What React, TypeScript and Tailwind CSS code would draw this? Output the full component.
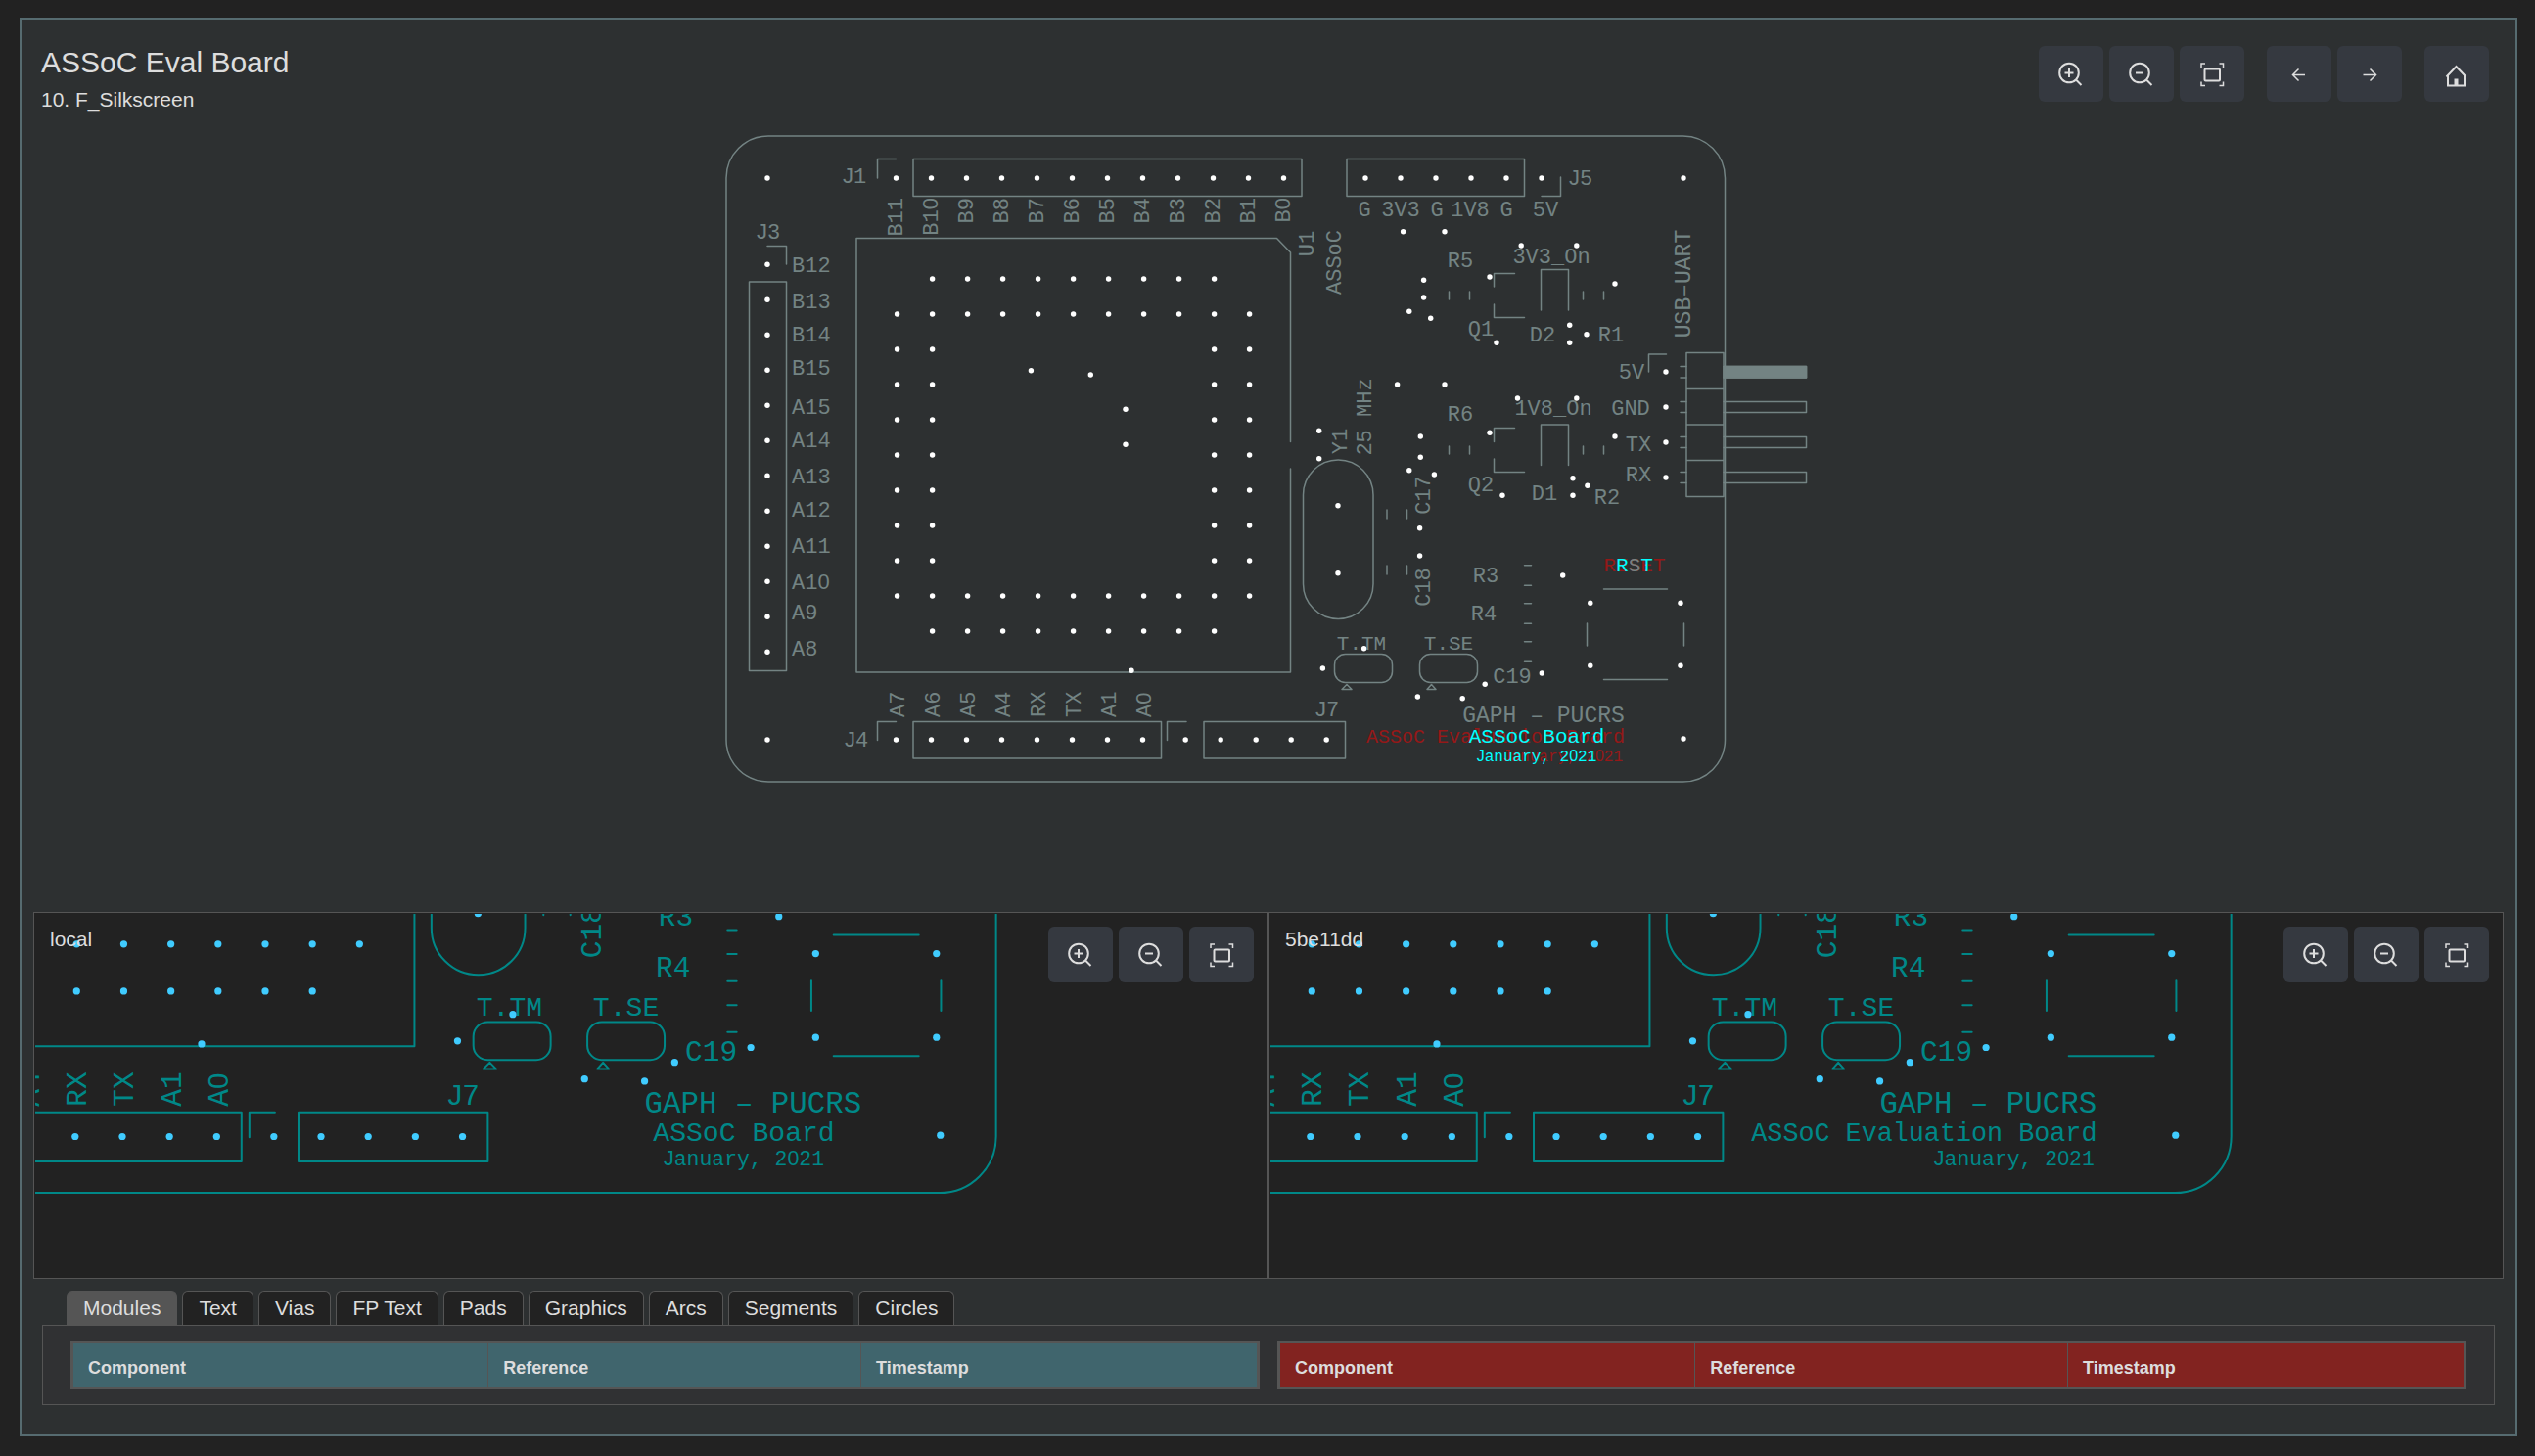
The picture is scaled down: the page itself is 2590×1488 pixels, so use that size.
import { useState } from "react";
import type { ReactNode } from "react";

type Point = [number, number];

/** n points from (x, y), each one (dx, dy) further on. */
function run(x: number, y: number, n: number, dx: number, dy: number): Point[] {
  return Array.from({ length: n }, (_, i): Point => [x + i * dx, y + i * dy]);
}

const DRILLS: Point[] = [
  // mounting holes
  [784, 182], [1720, 182], [784, 756], [1720, 755],
  // headers
  ...run(915.5, 182, 12, 36, 0),
  ...run(1395, 182, 6, 36, 0),
  ...run(784, 270.3, 12, 0, 36),
  ...run(915.5, 756, 8, 36, 0),
  ...run(1211.2, 756, 5, 36, 0),
  ...run(1702, 380, 4, 0, 36),
  // U1 socket
  ...run(952.6, 285, 9, 36, 0),
  ...run(916.6, 321, 11, 36, 0),
  ...run(916.6, 357, 7, 0, 36),
  ...run(952.6, 357, 7, 0, 36),
  ...run(1240.6, 357, 7, 0, 36),
  ...run(1276.6, 357, 7, 0, 36),
  ...run(916.6, 609, 11, 36, 0),
  ...run(952.6, 645, 9, 36, 0),
  // vias
  [1053.4, 378.7], [1114.3, 383], [1150, 418.3], [1150, 454.3], [1156, 685.3],
  [1433.6, 236.7], [1476, 236.7], [1554.2, 251], [1610.8, 251],
  [1454.6, 286.3], [1454.6, 304], [1439.8, 318.3], [1461.7, 325.3],
  [1522, 283], [1650, 290], [1603.7, 332.3], [1603.7, 350.3], [1621, 341.7], [1529, 350.3],
  [1427.6, 393], [1476, 393], [1550.5, 407], [1610.8, 407],
  [1347.7, 440.3], [1347.7, 468.7], [1451.3, 446], [1451.3, 467.3],
  [1439.8, 480.7], [1465.4, 485], [1522, 442.3], [1650, 446],
  [1607, 488.7], [1607, 506.3], [1621.9, 496.3], [1535, 506.3],
  [1367, 516.7], [1367, 585.7], [1450.6, 539.7], [1450.6, 568],
  [1596.7, 588], [1624.8, 616.3], [1717, 616.3], [1624.8, 680.3], [1717, 680.3],
  [1393.6, 662.7], [1351.4, 683], [1517.2, 699.3], [1575.3, 688], [1448.4, 712], [1494.2, 713.7],
];

const OUTLINES = [
  // J1, J5, J3, J4, J7
  "M896.5 182V162.5H915.5M933 162.5H1330V200.5H933Z",
  "M1376 162.5H1557.5V200.5H1376ZM1575 200.5H1594.5V181",
  "M784 251.5H803.5V270M765.5 288H803.5V685.5H765.5Z",
  "M896.5 756.5V737.5H915.5M933 737.5H1186.5V775H933Z",
  "M1192.5 756.5V737.5H1212M1230 737.5H1374.5V775H1230Z",
  // U1
  "M1318.5 451.5V258L1304.5 243.5H875V687H1318.5V479",
  // Q1, D2 and their resistors
  "M1547.5 279.5H1526.5V293M1526.5 311V324.5H1557.5M1574.5 317V275.5H1602.5V317",
  "M1480.5 298V306M1501.5 298V306M1617.5 298V306M1638.5 298V306",
  // Q2, D1 and their resistors
  "M1547.5 437.5H1526.5V451.5M1526.5 469V482.5H1557.5M1574.5 475.5V434H1602.5V475.5",
  "M1480.5 456V464M1501.5 456V464M1617.5 456V464M1638.5 456V464",
  // USB-UART header
  "M1684.5 380V362H1702.5M1723 360.5H1761V507.5H1723ZM1723 397.5H1761M1723 434H1761M1723 470.5H1761",
  "M1761 374.5H1845.5V386H1761M1761 410.5H1845.5V421.5H1761M1761 446.5H1845.5V457.5H1761M1761 482.5H1845.5V493.5H1761",
  "M1717 374.5H1723M1717 386H1723M1717 410.5H1723M1717 421.5H1723M1717 446.5H1723M1717 457.5H1723M1717 482.5H1723M1717 493.5H1723",
  // C17, C18
  "M1417 521V530M1437.5 521V530M1417 578V587M1437.5 578V587",
  // R3, R4, C19
  "M1557.5 577.7H1564.5M1557.5 598.3H1564.5M1557.5 616.7H1564.5M1557.5 637.3H1564.5M1557.5 655.7H1564.5M1557.5 676.3H1564.5",
  // reset switch
  "M1638.5 602H1703.5M1638.5 694.5H1703.5M1621.5 637V660M1720.5 637V660",
  // pin one marks
  "M1371 704.5L1376 699.5L1381 704.5ZM1458 704.5L1462.5 699.5L1467 704.5Z",
];

type Label = { t: string; x: number; y: number; up?: boolean; anchor?: "start" | "middle" | "end"; size?: number };

const side = ["B12", "B13", "B14", "B15", "A15", "A14", "A13", "A12", "A11", "A10", "A9", "A8"];
const sideY = [278, 315, 349, 383, 423, 457, 494, 528, 565, 602, 633, 670];

const LABELS: Label[] = [
  { t: "J1", x: 873, y: 187 },
  { t: "J3", x: 785, y: 244 },
  { t: "J4", x: 875, y: 763 },
  { t: "J5", x: 1615, y: 189 },
  { t: "J7", x: 1356, y: 732 },
  ...["B11", "B10", "B9", "B8", "B7", "B6", "B5", "B4", "B3", "B2", "B1", "B0"].map(
    (t, i): Label => ({ t, x: 922 + i * 36, y: 202, up: true, anchor: "end" }),
  ),
  ...side.map((t, i): Label => ({ t, x: 809, y: sideY[i], anchor: "start" })),
  ...["A7", "A6", "A5", "A4", "RX", "TX", "A1", "A0"].map(
    (t, i): Label => ({ t, x: 924 + i * 36, y: 733, up: true, anchor: "start" }),
  ),
  { t: "U1", x: 1342, y: 249, up: true },
  { t: "ASSoC", x: 1370, y: 268, up: true },
  { t: "G", x: 1394, y: 221 },
  { t: "3V3", x: 1431, y: 221 },
  { t: "G", x: 1468, y: 221 },
  { t: "1V8", x: 1502, y: 221 },
  { t: "G", x: 1539, y: 221 },
  { t: "5V", x: 1579, y: 221 },
  { t: "R5", x: 1492, y: 273 },
  { t: "3V3_On", x: 1585, y: 269 },
  { t: "Q1", x: 1513, y: 343 },
  { t: "D2", x: 1576, y: 349 },
  { t: "R1", x: 1646, y: 349 },
  { t: "USB–UART", x: 1727, y: 290, up: true, size: 23 },
  { t: "5V", x: 1667, y: 387 },
  { t: "GND", x: 1666, y: 424 },
  { t: "TX", x: 1674, y: 461 },
  { t: "RX", x: 1674, y: 492 },
  { t: "R6", x: 1492, y: 430 },
  { t: "1V8_On", x: 1587, y: 424 },
  { t: "Q2", x: 1513, y: 502 },
  { t: "D1", x: 1578, y: 511 },
  { t: "R2", x: 1642, y: 515 },
  { t: "25 MHz", x: 1401, y: 426, up: true },
  { t: "Y1", x: 1376, y: 451, up: true },
  { t: "C17", x: 1461, y: 506, up: true },
  { t: "C18", x: 1461, y: 600, up: true },
  { t: "R3", x: 1518, y: 595 },
  { t: "R4", x: 1516, y: 634 },
  { t: "T.TM", x: 1391, y: 664, size: 21 },
  { t: "T.SE", x: 1480, y: 664, size: 21 },
  { t: "C19", x: 1545, y: 698 },
  { t: "GAPH – PUCRS", x: 1577, y: 738, size: 23 },
];

/** Mono lettering with a plain zero and a plain J. */
function lettering(text: string): ReactNode {
  return text.split(/([0J])/).map((part, i) =>
    part === "0" || part === "J" ? (
      <tspan key={i} fontFamily='"Liberation Sans", sans-serif'>
        {part}
      </tspan>
    ) : (
      part
    ),
  );
}

function SilkText({ t, x, y, up, anchor = "middle", size = 22 }: Label) {
  return (
    <text
      x={x}
      y={y}
      fontSize={size}
      textAnchor={anchor}
      transform={up ? `rotate(-90 ${x} ${y})` : undefined}
      xmlSpace="preserve"
    >
      {lettering(t)}
    </text>
  );
}

const MONO = '"Liberation Mono", monospace';

type BoardProps = { line: string; dot: string; from?: Point; children: ReactNode };

/** The silkscreen; labels and holes left of or above `from` are skipped. */
function Board({ line, dot, from = [0, 0], children }: BoardProps) {
  const shown = (x: number, y: number) => x >= from[0] && y >= from[1];
  return (
    <>
      <g fill="none" stroke={line} strokeWidth={1.5} strokeLinecap="round" strokeLinejoin="round">
        <rect x={742} y={139} width={1020.5} height={660} rx={43} />
        <rect x={1331.5} y={470} width={71.5} height={162.5} rx={35.75} />
        <rect x={1363.5} y={668.5} width={59} height={29} rx={11} />
        <rect x={1450.5} y={668.5} width={59} height={29} rx={11} />
        <rect x={1761} y={374.5} width={84.5} height={11.5} fill={line} />
        {OUTLINES.map((d) => (
          <path key={d} d={d} />
        ))}
      </g>
      <g fill={line} fontFamily={MONO}>
        {LABELS.filter((l) => shown(l.x, l.y)).map((l) => (
          <SilkText key={`${l.x},${l.y}`} {...l} />
        ))}
      </g>
      <g fontFamily={MONO}>{children}</g>
      <g fill={dot}>
        {DRILLS.filter(([x, y]) => shown(x, y)).map(([x, y]) => (
          <circle key={`${x},${y}`} cx={x} cy={y} r={2.7} />
        ))}
      </g>
    </>
  );
}

function Icon({ children, width = 2 }: { children: ReactNode; width?: number }) {
  return (
    <svg
      aria-hidden="true"
      viewBox="0 0 24 24"
      className="size-6 overflow-visible"
      fill="none"
      stroke="currentColor"
      strokeWidth={width}
    >
      {children}
    </svg>
  );
}

const icons = {
  zoomIn: (
    <Icon>
      <circle cx={10} cy={10.5} r={9.8} />
      <path d="M5.5 10.5H14.5M10 6V15M17 17.5L22.5 23" />
    </Icon>
  ),
  zoomOut: (
    <Icon>
      <circle cx={10} cy={10.5} r={9.8} />
      <path d="M6 10.5H14M17 17.5L22.5 23" />
    </Icon>
  ),
  fit: (
    <Icon width={1.5}>
      <path d="M1 5V1H5M19.5 1H23.5V5M23.5 19.5V23.5H19.5M5 23.5H1V19.5" />
      <rect x={4.5} y={6.5} width={15.5} height={12} rx={1} strokeWidth={2} />
    </Icon>
  ),
  back: (
    <Icon width={1.5}>
      <path d="M18 12.5H5.5M11.5 6.5L5.5 12.5L11.5 18.5" />
    </Icon>
  ),
  forward: (
    <Icon width={1.5}>
      <path d="M5.5 12.5H18.5M12.5 6.5L18.5 12.5L12.5 18.5" />
    </Icon>
  ),
  home: (
    <Icon>
      <path d="M1.5 14.5L11.5 4L21.5 14.5M3 13V23.5H20V13" />
      <rect x={9.5} y={16.5} width={4} height={7} fill="currentColor" stroke="none" />
    </Icon>
  ),
};

function ToolButton({ label, icon }: { label: string; icon: ReactNode }) {
  return (
    <button
      type="button"
      aria-label={label}
      className="flex h-[57px] w-[66px] items-center justify-center rounded-md bg-[#353940] text-[#dddddd]"
    >
      {icon}
    </button>
  );
}

function ZoomButtons() {
  return (
    <div className="flex gap-1.5">
      <ToolButton label="Zoom in" icon={icons.zoomIn} />
      <ToolButton label="Zoom out" icon={icons.zoomOut} />
      <ToolButton label="Fit to view" icon={icons.fit} />
    </div>
  );
}

const RED = "#951818";
const CYAN = "#00ffff";
const GREY = "#738383";
const TEAL = "#008888";

function BoardPane({ name, children }: { name: string; children: ReactNode }) {
  return (
    <section aria-label={name} className="grid overflow-hidden border border-[#555555] bg-[#222222] p-px">
      <svg
        aria-hidden="true"
        viewBox="1029 586 940 278"
        preserveAspectRatio="xMinYMin slice"
        className="col-start-1 row-start-1 h-[371px] w-full"
      >
        <Board line={TEAL} dot="#40ccff" from={[1029, 580]}>
          <g fill={TEAL}>{children}</g>
        </Board>
      </svg>
      <div className="z-10 col-start-1 row-start-1 flex items-start justify-between pr-[13px] pl-[15px]">
        <h2 className="pt-2 text-[21px] leading-9">{name}</h2>
        <div className="pt-[13px]">
          <ZoomButtons />
        </div>
      </div>
    </section>
  );
}

function DiffTable({ label, tone }: { label: string; tone: string }) {
  return (
    <table
      aria-label={label}
      className="w-full table-fixed border-separate border-spacing-0 border-3 border-[#555555] text-left text-lg font-bold"
    >
      <thead>
        <tr className={tone}>
          <th scope="col" className="h-11 w-[35%] px-[15px] pt-1.5">Component</th>
          <th scope="col" className="h-11 w-[31.5%] border-l border-[#555555] px-[15px] pt-1.5">Reference</th>
          <th scope="col" className="h-11 border-l border-[#555555] px-[15px] pt-1.5">Timestamp</th>
        </tr>
      </thead>
    </table>
  );
}

const TABS = ["Modules", "Text", "Vias", "FP Text", "Pads", "Graphics", "Arcs", "Segments", "Circles"];

export default function App() {
  const [tab, setTab] = useState("Modules");
  return (
    <div className="flex h-screen bg-[#222222] pt-[18px] pr-[18px] pb-5 pl-5 font-['Liberation_Sans',Arial,sans-serif] text-[#dddddd]">
      <main className="flex min-w-0 flex-1 flex-col border-2 border-[#566b70] bg-[#2d3031] px-3">
        <section aria-label="Board difference" className="grid min-h-0 flex-1 grid-rows-1">
          <svg
            aria-hidden="true"
            viewBox="34 20 2524 912"
            className="col-start-1 row-start-1 h-full min-h-0 w-full"
          >
            <Board line={GREY} dot="#ffffff">
              <g fill={RED}>
                <SilkText t="RESET" x={1670} y={584} size={21} />
                <SilkText t="ASSoC Evaluation Board" x={1660} y={759} size={20} anchor="end" />
                <SilkText t="January, 2021" x={1658} y={778} size={16} anchor="end" />
              </g>
              <g fill={CYAN}>
                <text x={1670} y={584} fontSize={21} textAnchor="middle">
                  R<tspan fill={GREY}>S</tspan>T
                </text>
                <SilkText t="ASSoC Board" x={1570} y={759} size={21} />
                <SilkText t="January, 2021" x={1570} y={778} size={16} />
              </g>
            </Board>
          </svg>
          <header className="z-10 col-start-1 row-start-1 flex items-start justify-between self-start pr-[15px] pl-2">
            <div className="pt-6">
              <h1 className="text-3xl leading-10">ASSoC Eval Board</h1>
              <p className="text-[21px] leading-9">10. F_Silkscreen</p>
            </div>
            <div className="flex gap-[23px] pt-[27px]">
              <ZoomButtons />
              <div className="flex gap-1.5">
                <ToolButton label="Previous layer" icon={icons.back} />
                <ToolButton label="Next layer" icon={icons.forward} />
              </div>
              <ToolButton label="Home" icon={icons.home} />
            </div>
          </header>
        </section>

        <div className="grid grid-cols-2">
          <BoardPane name="local">
            <SilkText t="ASSoC Board" x={1570} y={759} size={21} />
            <SilkText t="January, 2021" x={1570} y={778} size={16} />
          </BoardPane>
          <BoardPane name="5be11dd">
            <SilkText t="ASSoC Evaluation Board" x={1660} y={759} size={20} anchor="end" />
            <SilkText t="January, 2021" x={1658} y={778} size={16} anchor="end" />
          </BoardPane>
        </div>

        <div className="mx-[9px] mt-3 mb-[30px]">
          <div role="tablist" className="flex gap-[5px] pl-[25px]">
            {TABS.map((name) => (
              <button
                key={name}
                type="button"
                role="tab"
                aria-selected={tab === name}
                onClick={() => setTab(name)}
                className="h-[35px] rounded-t-md border border-b-0 border-[#555555] bg-[#222222] px-4 text-[21px] leading-8 aria-selected:bg-[#555555]"
              >
                {name}
              </button>
            ))}
          </div>
          <div
            role="tabpanel"
            aria-label={tab}
            className="grid grid-cols-2 gap-[18px] border border-[#555555] bg-[#303133] px-7 py-[15px]"
          >
            <DiffTable label="Added" tone="bg-[#40656d]" />
            <DiffTable label="Removed" tone="bg-[#822320]" />
          </div>
        </div>
      </main>
    </div>
  );
}
